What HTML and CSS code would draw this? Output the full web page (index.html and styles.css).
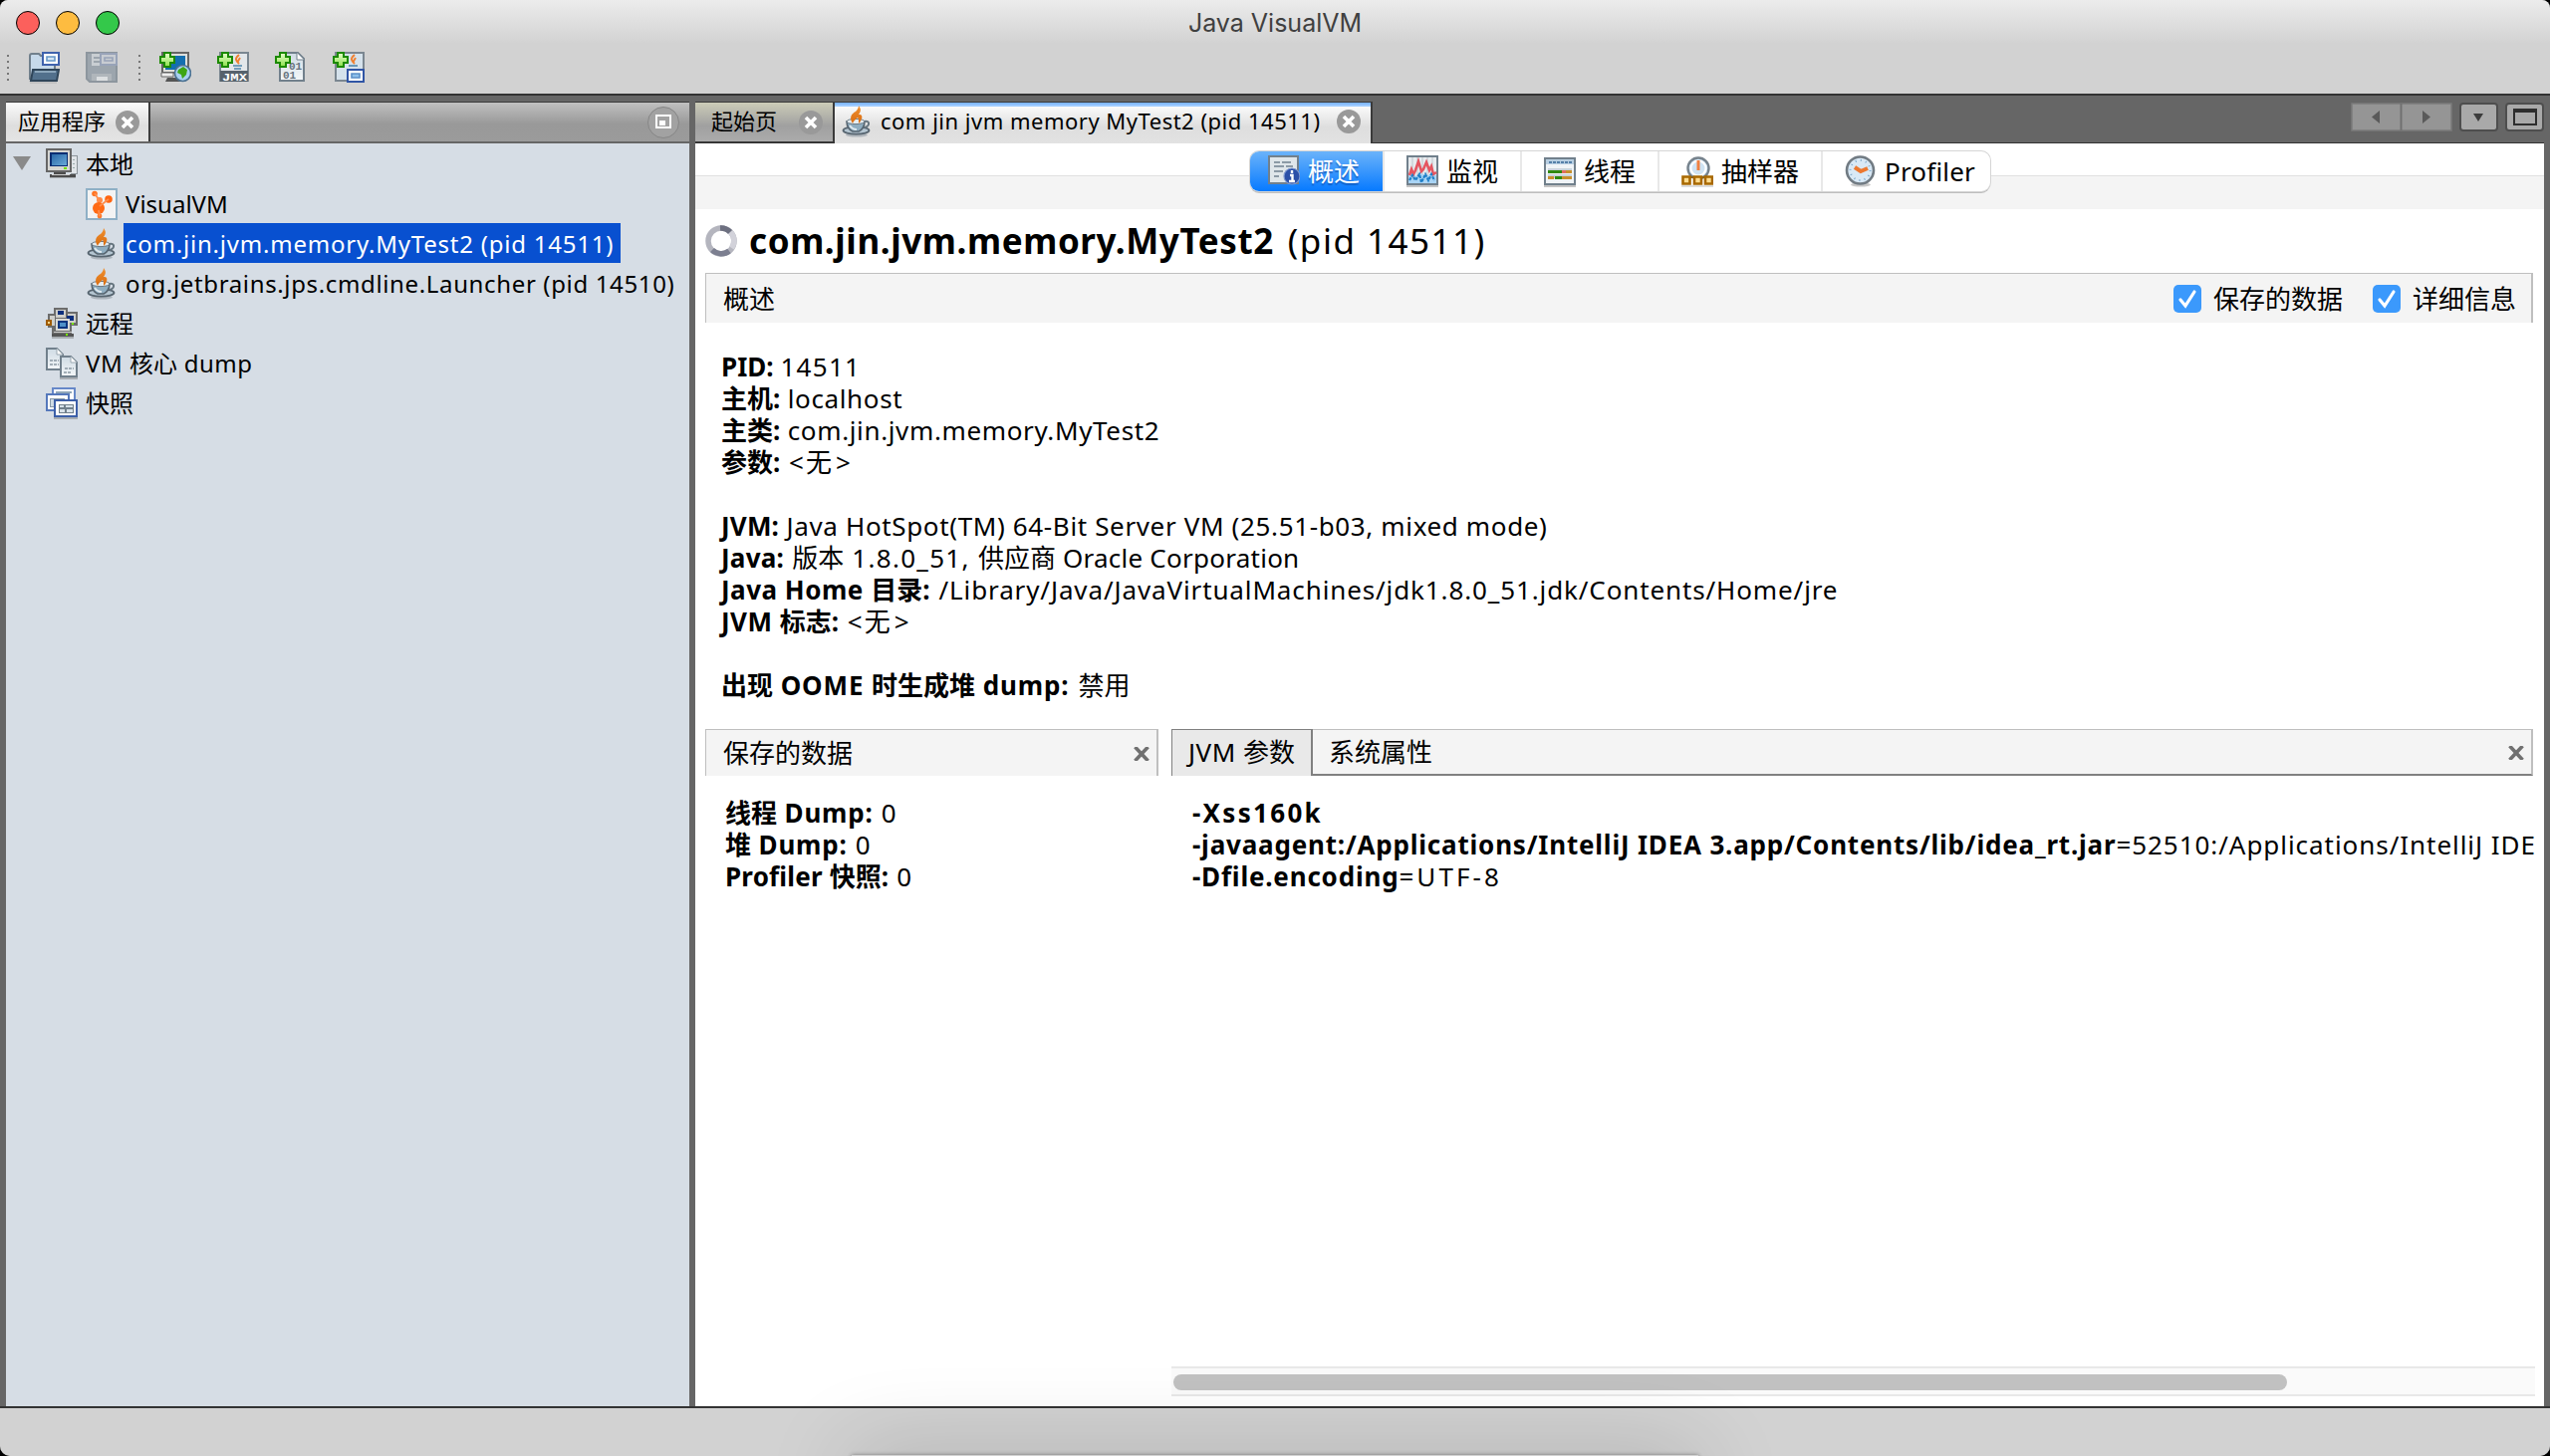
FILE: index.html
```
<!DOCTYPE html>
<html lang="zh-CN">
<head>
<meta charset="utf-8">
<title>Java VisualVM</title>
<link rel="stylesheet" href="styles.css">
</head>
<body>
<svg class="defs" width="0" height="0">
  <defs>
    <linearGradient id="gFlame" x1="0" y1="0" x2="0" y2="1"><stop offset="0" stop-color="#f09030"/><stop offset="1" stop-color="#d96c10"/></linearGradient>
    <linearGradient id="gScreen" x1="0" y1="0" x2="1" y2="1"><stop offset="0" stop-color="#2a68a8"/><stop offset="1" stop-color="#69a9d8"/></linearGradient>
    <linearGradient id="gPaper" x1="0" y1="0" x2="0" y2="1"><stop offset="0" stop-color="#cfdbe4"/><stop offset="1" stop-color="#f4f7f9"/></linearGradient>
    <linearGradient id="gPlus" x1="0" y1="0" x2="0" y2="1"><stop offset="0" stop-color="#e8ffd0"/><stop offset="1" stop-color="#8ce04a"/></linearGradient>
  </defs>
  <symbol id="plus" viewBox="0 0 16 16"><path d="M5 1h6v4h4v6h-4v4H5v-4H1V5h4z" fill="url(#gPlus)" stroke="#1c8a00" stroke-width="2"/></symbol>
  <symbol id="close" viewBox="0 0 24 24"><circle cx="12" cy="12" r="12" fill="#999"/><path d="M7 7l10 10M17 7L7 17" stroke="#fff" stroke-width="3.600"/></symbol>
  <symbol id="cross" viewBox="0 0 16 14"><path d="M1.500 0l13 14M14.500 0l-13 14" stroke="#707070" stroke-width="3.600"/></symbol>
  <symbol id="java" viewBox="0 0 32 32">
    <ellipse cx="16" cy="29.500" rx="11" ry="2" fill="#9aa3ab" opacity=".7"/>
    <ellipse cx="15.500" cy="25" rx="13" ry="3.600" fill="#b4c5d1" stroke="#56646f" stroke-width="1.800"/>
    <path d="M6 16h18c0 5-3 9-6 10h-6c-3-1-6-5-6-10z" fill="#8fadc0" stroke="#56646f" stroke-width="1.600"/>
    <path d="M24 16c5-1 6 4 0 6" fill="none" stroke="#66757f" stroke-width="2"/>
    <ellipse cx="15" cy="16" rx="9" ry="2.600" fill="#e5edf2" stroke="#6b7a85"/>
    <path d="M9 20c2 3 5 4 7 4" stroke="#dfe9ef" stroke-width="2" fill="none"/>
    <path d="M12 18c-4-6-1-10 3-12 2-2 3-4 3-6 3 4 2 6 0 9 5-1 4 5 0 9 0-3 0-5-1-6-2 2-4 3-5 6z" fill="url(#gFlame)"/>
  </symbol>
  <symbol id="local" viewBox="0 0 32 32" shape-rendering="crispEdges">
    <path d="M24 7h8v19h-8z" fill="#e0e4e8"/><path d="M25 7h6v18h-6" fill="none" stroke="#8c949a" stroke-width="1"/><path d="M27 11h2M27 15h2M27 19h2" stroke="#9aa"/>
    <path d="M0 0h26v24H0z" fill="#666"/><path d="M2 2h22v20H2z" fill="#d6d6d2"/>
    <path d="M4 4h18v14H4z" fill="#082d72"/><path d="M6 6h15v11H6z" fill="url(#gScreen)"/>
    <path d="M18 19h3v2h-3z" fill="#70e000"/><path d="M8 24h12v2H8zM4 26h26v3H4z" fill="#4c4c4c"/><path d="M6 26h18v1H6z" fill="#ccc"/><path d="M4 29h26v1H4z" fill="#a8adb2"/>
  </symbol>
  <symbol id="vvm" viewBox="0 0 32 32">
    <path d="M1 1h30v30H1z" fill="#f3f3f3" stroke="#8fb0c6" stroke-width="2"/>
    <circle cx="9" cy="5.500" r="2.800" fill="#ff7320"/><circle cx="14" cy="12" r="3" fill="#ff8a48"/><circle cx="23" cy="11" r="3.800" fill="#ff6510"/><circle cx="13" cy="20" r="6" fill="#ff6a14"/><circle cx="14" cy="28" r="2.400" fill="#ff7a2c"/><path d="M9 5l5 8M23 11l-9 7M13 22l1 6" stroke="#ff8d4c" stroke-width="1.800"/>
  </symbol>
  <symbol id="remote" viewBox="0 0 32 32" shape-rendering="crispEdges">
    <path d="M8 0h14v4h10v14h-6v12H6V20H2V6h6z" fill="#6c6c6c"/>
    <path d="M10 2h10v8H10zM22 6h8v9h-8zM4 8h5v10H4z" fill="#cfcfca"/>
    <path d="M12 3h6v4h-6zM21 8h7v5h-7z" fill="#0c2f7c"/>
    <path d="M10 11h14v12H10z" fill="#d9d9d5"/><path d="M12 13h10v8H12z" fill="#0b3580"/><path d="M14 15h6v4h-6z" fill="#4d90c9"/>
    <path d="M0 12h6v6H0z" fill="#a05c00"/><path d="M2 14h2v2H2z" fill="#ffd58a"/>
    <path d="M8 24h18v1H8z" fill="#ccc"/><path d="M6 26h22v3H6z" fill="#555"/><path d="M20 26h2v2h-2zM26 15h2v2h-2z" fill="#7e0"/><path d="M6 29h22v2H6z" fill="#a8adb2"/>
  </symbol>
  <symbol id="dump" viewBox="0 0 32 32">
    <path d="M1 1h10l6 6v15H1z" fill="url(#gPaper)" stroke="#71808c" stroke-width="2"/><path d="M11 1v6h6" fill="#fff" stroke="#9aa7b1"/><path d="M4 13h9M4 17h9" stroke="#8b98a2" stroke-width="1.600" stroke-dasharray="3 1"/>
    <path d="M15 9h10l6 6v14H15z" fill="url(#gPaper)" stroke="#71808c" stroke-width="2"/><path d="M25 9v6h6" fill="#fff" stroke="#9aa7b1"/><path d="M19 21h9M18 25h8" stroke="#8b98a2" stroke-width="1.600" stroke-dasharray="3 1"/>
    <path d="M14 31h18" stroke="#a8adb2" stroke-width="2"/>
  </symbol>
  <symbol id="snap" viewBox="0 0 32 32" shape-rendering="crispEdges">
    <path d="M7 1h22v16H7z" fill="#fff" stroke="#6688c8" stroke-width="2"/><path d="M10 5h16" stroke="#8fa6b8" stroke-width="2"/>
    <path d="M1 7h22v16H1z" fill="#fff" stroke="#5578bb" stroke-width="2"/><path d="M4 11h14v8H4z" fill="#cfdbe4" stroke="#8899a8"/>
    <path d="M9 13h22v16H9z" fill="#fff" stroke="#3c5fa8" stroke-width="2"/><path d="M13 17h14v8H13z" fill="#d8e2ea" stroke="#71808c"/><path d="M13 21h6v-4M20 25v-4h7" fill="none" stroke="#71808c" stroke-width="1.500"/>
    <path d="M8 31h24" stroke="#a8adb2" stroke-width="2"/>
  </symbol>
</svg>

<div class="window">
  <header class="chrome">
    <div class="titlebar">
      <div class="lights"><i class="red"></i><i class="amber"></i><i class="green"></i></div>
      <div class="caption">Java VisualVM</div>
    </div>
    <div class="toolbar">
      <i class="grip"></i>
      <svg class="tool" viewBox="0 0 32 32"><path d="M2 28V4q0-2 2-2h7l2 2h14v16" fill="#c6d9ea" stroke="#71808c" stroke-width="2"/><path d="M5 18h26l-2 11H3z" fill="#52708c" stroke="#2f4559" stroke-width="2"/><path d="M7 20h21" stroke="#8ba5ba" stroke-width="2"/><path d="M15 1h16v12H15z" fill="#fff" stroke="#3f62ad" stroke-width="2"/><path d="M19 5h8v4h-8z" fill="#d4e6f5" stroke="#6697c8" stroke-width="1.600"/><path d="M2 31h27" stroke="#b0b0b0"/></svg>
      <svg class="tool" viewBox="0 0 32 32"><path d="M1 1h30v29H4l-3-3z" fill="#9ca5ad" stroke="#8d969e" stroke-width="2"/><path d="M6 2h20v12H6z" fill="#c9ced2"/><path d="M8 6h6M8 10h6" stroke="#9ca5ad" stroke-width="2"/><path d="M15 2h16v11H15z" fill="#c8ccd2" stroke="#98a3b8" stroke-width="2"/><path d="M19 6h8v3h-8z" fill="none" stroke="#98a3b8" stroke-width="1.600"/><path d="M6 22h20v7H6z" fill="#b0b6bb"/><path d="M11 25h11v4H11z" fill="#dcdfe1"/></svg>
      <i class="grip grip-2"></i>
      <svg class="tool" viewBox="0 0 32 32"><path d="M3 1h26v20H3z" fill="#dedfdc" stroke="#666" stroke-width="2"/><path d="M6 4h20v14H6z" fill="#136fb0"/><path d="M8 26h14v4H6z" fill="#555"/><path d="M2 21h12v4H2z" fill="#eee" stroke="#666"/><circle cx="23.500" cy="21.500" r="8" fill="#a9d0f0" stroke="#4b7192" stroke-width="1.600"/><path d="M19 18l5-3 4 3-1 5-4 4-1-4-4-2z" fill="#3da514"/><use href="#plus" width="16" height="16"/></svg>
      <svg class="tool" viewBox="0 0 32 32"><path d="M3 1h28v28H3z" fill="#e3e7ea" stroke="#7b8791" stroke-width="2"/><path d="M22 3c-5 4-3 6 0 9M23 6l-3 5" stroke="#f08030" stroke-width="2" fill="none"/><path d="M16 14h9M17 17h7" stroke="#4d86ad" stroke-width="1.600"/><path d="M3 19h28v11H3z" fill="#56626c"/><text x="17.500" y="29" class="mini" fill="#fff" text-anchor="middle" textLength="25" lengthAdjust="spacingAndGlyphs">JMX</text><use href="#plus" width="16" height="16"/></svg>
      <svg class="tool" viewBox="0 0 32 32"><path d="M5 1h18l6 6v22H5z" fill="url(#gPaper)" stroke="#71808c" stroke-width="2"/><path d="M22 1v7h7" fill="#fff" stroke="#71808c"/><text x="14" y="18" class="mini" fill="#67747f">01</text><text x="8" y="27" class="mini" fill="#67747f">01</text><use href="#plus" width="16" height="16"/></svg>
      <svg class="tool" viewBox="0 0 32 32"><path d="M3 1h28v28H3z" fill="#d5e2ec" stroke="#7b8791" stroke-width="2"/><path d="M22 3c-5 4-3 6 0 9M23 6l-3 5" stroke="#f08030" stroke-width="2" fill="none"/><path d="M16 14h9" stroke="#4d86ad" stroke-width="1.600"/><path d="M15 18h16v12H15z" fill="#fff" stroke="#3055a5" stroke-width="2"/><path d="M19 22h8v4h-8z" fill="#8fc0ea" stroke="#5b8fc8" stroke-width="1.600"/><use href="#plus" width="16" height="16"/></svg>
    </div>
  </header>

  <main class="desk">
    <aside class="side">
      <div class="side-head">
        <div class="side-tab"><span>应用程序</span><svg class="x24"><use href="#close"/></svg></div>
        <svg class="min" viewBox="0 0 32 32"><circle cx="16" cy="16" r="15.500" fill="#a2a2a2" stroke="#868686"/><path d="M9 9h14v12H9z" fill="none" stroke="#fff" stroke-width="2"/><path d="M12 14h6v5h-6z" fill="#fff"/></svg>
      </div>
      <ul class="tree">
        <li class="node"><i class="arrow"></i><svg class="ic"><use href="#local"/></svg><span class="lbl">本地</span></li>
        <li class="node child"><svg class="ic"><use href="#vvm"/></svg><span class="lbl l0">VisualVM</span></li>
        <li class="node child"><svg class="ic"><use href="#java"/></svg><span class="lbl sel l7">com.jin.jvm.memory.MyTest2 (pid 14511)</span></li>
        <li class="node child"><svg class="ic"><use href="#java"/></svg><span class="lbl l6">org.jetbrains.jps.cmdline.Launcher (pid 14510)</span></li>
        <li class="node"><svg class="ic"><use href="#remote"/></svg><span class="lbl">远程</span></li>
        <li class="node"><svg class="ic"><use href="#dump"/></svg><span class="lbl"><span class="l5">VM </span>核心<span class="l5"> dump</span></span></li>
        <li class="node"><svg class="ic"><use href="#snap"/></svg><span class="lbl">快照</span></li>
      </ul>
    </aside>

    <section class="work">
      <div class="tabs">
        <div class="tab idle"><span>起始页</span><svg class="x24"><use href="#close"/></svg></div>
        <div class="tab active"><svg class="tab-ic"><use href="#java"/></svg><span class="l5">com jin jvm memory MyTest2 (pid 14511)</span><svg class="x24"><use href="#close"/></svg></div>
        <div class="winbtns">
          <svg class="pair" viewBox="0 0 102 29"><path d="M1 1h100v27H1z" fill="#959595" stroke="#7b7b7b" stroke-width="1.500"/><path d="M50.500 1v27" stroke="#707070" stroke-width="2"/><path d="M29 8v13l-8-6.500zM72 8v13l8-6.500z" fill="#5a5a5a"/></svg>
          <svg class="one" viewBox="0 0 39 29"><rect x="1" y="1" width="37" height="27" rx="3" fill="#a9a9a9" stroke="#4e4e4e" stroke-width="2"/><path d="M14 11h10l-5 8z" fill="#3c3c3c"/></svg>
          <svg class="one" viewBox="0 0 39 29"><rect x="1" y="1" width="37" height="27" rx="3" fill="#a9a9a9" stroke="#4e4e4e" stroke-width="2"/><path d="M9 7h22v15H9z" fill="none" stroke="#2e2e2e" stroke-width="2"/><path d="M8 6h24v4H8z" fill="#2e2e2e"/></svg>
        </div>
      </div>

      <div class="page">
        <div class="switch">
          <div class="segs">
            <div class="seg on"><svg class="ic" viewBox="0 0 32 32"><path d="M1 1h29v27H1z" fill="#dfe6ea" stroke="#71808c" stroke-width="2"/><path d="M6 7h6M14 7h9M6 11h10M18 11h7M6 16h9M6 21h5" stroke="#8b9aa6" stroke-width="2"/><circle cx="24" cy="21" r="8" fill="#2b50a8" stroke="#7f99d0" stroke-width="1.200"/><path d="M24 15v3M22 20h2.500v6M21 26h6" stroke="#fff" stroke-width="2.400" fill="none"/></svg><span>概述</span></div>
            <div class="seg s2"><svg class="ic" viewBox="0 0 32 32"><path d="M1 1h30v28H1z" fill="#e8ecef" stroke="#71808c" stroke-width="2"/><path d="M6 2v18M11 2v18M16 2v18M21 2v18M26 2v18" stroke="#bdc6cd"/><path d="M2 20l4-2 4 3 5-3 5 3 5-3 5 2v8H2z" fill="#a9d4f5"/><path d="M3 20l2-6 2 5 2-4 3-9 3 10 2-2 3-7 3 8 2-4 2 8 3-2" fill="none" stroke="#e55560" stroke-width="2.600"/><path d="M3 25l3-5 3 5 4-6 2 8 4-8 3 6 3-6 3 6" fill="none" stroke="#1e7fc8" stroke-width="2.200" stroke-dasharray="3 1"/><path d="M0 31h32" stroke="#c4c4c4" stroke-width="2"/></svg><span>监视</span></div>
            <div class="seg s3"><svg class="ic" viewBox="0 0 32 32" shape-rendering="crispEdges"><path d="M1 3h30v26H1z" fill="#f0f4f7" stroke="#71808c" stroke-width="2"/><path d="M2 4h28v5H2z" fill="#b8cfe2"/><path d="M5 7h23" stroke="#5580a8" stroke-width="2" stroke-dasharray="3 1"/><path d="M4 15h24M4 21h24" stroke="#c9d3da" stroke-width="4"/><path d="M4 16h14" stroke="#308a10" stroke-width="3"/><path d="M18 16h4" stroke="#e07060" stroke-width="3"/><path d="M22 16h6M4 22h6M18 22h10" stroke="#c8902c" stroke-width="3"/><path d="M11 22h7" stroke="#308a10" stroke-width="3"/><path d="M0 31h32" stroke="#c4c4c4" stroke-width="2"/></svg><span>线程</span></div>
            <div class="seg s4"><svg class="ic" viewBox="0 0 32 32"><circle cx="17" cy="13" r="10.500" fill="#cfe3f3" stroke="#76828c" stroke-width="2.400"/><circle cx="17" cy="13" r="7.500" fill="none" stroke="#fff" stroke-width="2"/><path d="M17 5v10" stroke="#f08040" stroke-width="3"/><path d="M4 22h26" stroke="#8b6520" stroke-width="2"/><path d="M1.500 21.500h7v7h-7zM13 21.500h7v7h-7zM24 21.500h7v7h-7z" fill="#ffdc90" stroke="#a86800" stroke-width="2.600"/><path d="M0 31h32" stroke="#d0d0d0" stroke-width="1.500"/></svg><span>抽样器</span></div>
            <div class="seg s5"><svg class="ic" viewBox="0 0 32 32"><ellipse cx="16" cy="29.500" rx="10" ry="2" fill="#c8c8c8"/><circle cx="15.500" cy="15" r="13.500" fill="#d9e9f6" stroke="#717b83" stroke-width="2.600"/><circle cx="15.500" cy="15" r="10" fill="none" stroke="#7aa6c8" stroke-width="2" stroke-dasharray="1 4.236"/><path d="M10 12l6 4 7-3" fill="none" stroke="#ec7830" stroke-width="4"/></svg><span class="l2">Profiler</span></div>
          </div>
        </div>

        <h1 class="heading"><svg class="spin" viewBox="0 0 32 32"><circle cx="16" cy="16" r="13" fill="none" stroke="#b4b5be" stroke-width="5.500"/><path d="M15 3a13 13 0 0 1 10 4" fill="none" stroke="#6d7080" stroke-width="5.500"/><path d="M25.500 7a13 13 0 0 1 1 16" fill="none" stroke="#d2d2da" stroke-width="5.500"/><path d="M24 26a13 13 0 0 1-17-1" fill="none" stroke="#7c7f90" stroke-width="5.500"/></svg><b>com.jin.jvm.memory.MyTest2</b><span class="pid">(pid 14511)</span></h1>

        <div class="bar top">
          <span class="grow">概述</span>
          <label class="chk"><svg viewBox="0 0 28 28"><rect width="28" height="28" rx="5" fill="#3b99fc"/><path d="M7 15l5 6L21 7" fill="none" stroke="#fff" stroke-width="3.200" stroke-linecap="round"/></svg><span>保存的数据</span></label>
          <label class="chk"><svg viewBox="0 0 28 28"><rect width="28" height="28" rx="5" fill="#3b99fc"/><path d="M7 15l5 6L21 7" fill="none" stroke="#fff" stroke-width="3.200" stroke-linecap="round"/></svg><span>详细信息</span></label>
        </div>

        <div class="info">
          <p><b class="l0">PID:</b><span class="l0"> </span><span class="d1">14511</span></p>
          <p><b>主机:</b><span class="l6"> localhost</span></p>
          <p><b>主类:</b><span class="l6"> com.jin.jvm.memory.MyTest2</span></p>
          <p><b>参数:</b><span class="a"> &lt;</span>无<span class="g">&gt;</span></p>
          <p>&nbsp;</p>
          <p><b class="l2">JVM:</b><span class="l6"> Java HotSpot(TM) 64-Bit Server VM (25.51-b03, mixed mode)</span></p>
          <p><b class="l3">Java:</b><span class="d1"> </span>版本<span class="d1"> 1.8.0_51, </span>供应商<span class="l3"> Oracle Corporation</span></p>
          <p><b><span class="l5">Java Home </span>目录:</b><span class="w2"> </span><span class="l9">/Library/Java/JavaVirtualMachines/jdk1.8.0_51.jdk/Contents/Home/jre</span></p>
          <p><b><span class="l5">JVM </span>标志:</b><span class="a"> &lt;</span>无<span class="g">&gt;</span></p>
          <p>&nbsp;</p>
          <p><b>出现<span class="l9"> OOME </span>时生成堆<span class="l9"> dump:</span></b><span class="w2"> </span>禁用</p>
        </div>

        <div class="panes">
          <div class="pane left">
            <div class="bar"><span class="grow">保存的数据</span><svg class="x16"><use href="#cross"/></svg></div>
            <div class="rows">
              <p><b>线程<span class="l8"> Dump:</span></b><span class="d1"> 0</span></p>
              <p><b>堆<span class="l8"> Dump:</span></b><span class="d1"> 0</span></p>
              <p><b><span class="l2">Profiler </span>快照:</b><span class="d1"> 0</span></p>
            </div>
          </div>
          <div class="pane right">
            <div class="bar2">
              <div class="on2"><span class="l5">JVM </span>参数</div>
              <div class="rest"><span class="grow">系统属性</span><svg class="x16"><use href="#cross"/></svg></div>
            </div>
            <div class="rows args">
              <p><b class="w2">-Xss160k</b></p>
              <p><b class="l8">-javaagent:/Applications/IntelliJ IDEA 3.app/Contents/lib/idea_rt.jar</b><span class="w1">=52510:/Applications/IntelliJ IDE</span></p>
              <p><b class="l8">-Dfile.encoding</b><span class="w3">=UTF-8</span></p>
            </div>
            <div class="scroll"><i></i></div>
          </div>
        </div>
      </div>
    </section>
  </main>
  <footer class="status"></footer>
  <div class="glow"></div>
</div>
</body>
</html>
```
FILE: styles.css
```
* { box-sizing: border-box; }
html, body { margin: 0; background: #000; }
body { font: 26px "Noto Sans", "Noto Sans CJK SC", sans-serif; color: #000; }
svg { display: block; flex: none; }
.defs { position: absolute; }
p { margin: 0; white-space: pre; }
i { display: block; flex: none; }

/* letter spacing steps */
.l0 { letter-spacing: 0; }
.l2 { letter-spacing: .2px; }
.l3 { letter-spacing: .25px; }
.l5 { letter-spacing: .5px; }
.l6 { letter-spacing: .64px; }
.l7 { letter-spacing: .78px; }
.l8 { letter-spacing: .8px; }
.l9 { letter-spacing: .88px; }
.d1 { letter-spacing: 1.3px; }
.w1 { letter-spacing: .95px; }
.w2 { letter-spacing: 2.3px; }
.w3 { letter-spacing: 3.1px; }
.a { letter-spacing: 2px; }
.g { margin-left: 4px; }

.window { position: relative; width: 2560px; height: 1462px; display: flex; flex-direction: column; overflow: hidden; border-radius: 8px 8px 10px 10px; background: #666; }

/* window chrome */
.chrome { height: 96px; border-bottom: 2px solid #333; background: linear-gradient(#ececec, #d2d2d2 44px); }
.titlebar { height: 44px; display: grid; grid-template-columns: 240px 1fr 240px; align-items: center; }
.lights { display: flex; gap: 16px; padding-left: 16px; }
.lights i { width: 24px; height: 24px; border-radius: 50%; border: 1px solid; }
.red { background: #fc605c; border-color: #e0443e; }
.amber { background: #fdbc40; border-color: #dea035; }
.green { background: #34c84a; border-color: #27aa35; }
.caption { text-align: center; font: 25px/44px Inter, sans-serif; color: #404040; padding-top: 1px; }
.toolbar { display: flex; align-items: center; height: 48px; padding-left: 7px; gap: 26px; }
.tool { width: 32px; height: 32px; }
.mini { font: bold 11px "Liberation Mono", monospace; }
.grip { width: 2px; height: 26px; margin-right: -7px; background: repeating-linear-gradient(#777 0 2px, transparent 2px 6px); }
.grip-2 { margin: 0 -7px 0 -5px; }

.desk { flex: 1; display: flex; gap: 6px; padding: 6px 6px 0; min-height: 0; border-bottom: 2px solid #333; }
.status { height: 48px; background: #d2d2d2; flex: none; }

/* left panel */
.side { width: 686px; display: flex; flex-direction: column; }
.side-head { height: 42px; display: flex; justify-content: space-between; align-items: center; border-top: 1px solid #3a3a3a; border-bottom: 2px solid #666; background: linear-gradient(#c0c0c0, #999 55%, #9b9b9b); padding-right: 10px; }
.side-tab { height: 39px; width: 145px; display: flex; align-items: center; gap: 10px; padding-left: 12px; font-size: 22px; line-height: 36px; background: linear-gradient(#fafafa, #dedede 60%, #e4e4e4); border-right: 2px solid #3c3c3c; }
.side-tab span { padding-bottom: 3px; }
.x24 { width: 24px; height: 24px; }
.min { width: 32px; height: 32px; }
.tree { flex: 1; margin: 0; padding: 0; list-style: none; background: #d6dde5; font-size: 24px; line-height: 38px; }
.node { position: relative; height: 40px; display: flex; align-items: center; padding: 2px 0 0 40px; }
.child { padding-left: 80px; }
.ic { width: 32px; height: 32px; }
.lbl { align-self: flex-end; height: 40px; margin-left: 6px; padding: 2px 7px 0 2px; white-space: pre; }
.sel { background: #0850d0; color: #fff; }
.arrow { position: absolute; left: 7px; top: 13px; border: 9px solid transparent; border-top: 14px solid #8a8a8a; border-bottom: 0; }

/* right panel */
.work { flex: 1; min-width: 0; display: flex; flex-direction: column; }
.tabs { height: 42px; display: flex; flex: none; border-bottom: 1px solid #333; }
.tab { display: flex; align-items: center; font-size: 22px; line-height: 34px; white-space: pre; border-top: 1px solid #3a3a3a; border-right: 2px solid #3a3a3a; }
.tab span { padding-bottom: 5px; }
.idle { width: 140px; padding: 0 10px 0 16px; justify-content: space-between; background: linear-gradient(#ccccb8, #a0a0a0 60%, #ababab); border-bottom: 1px solid #3a3a3a; }
.idle span { padding-bottom: 3px; }
.active { width: 540px; padding-left: 6px; margin-bottom: -1px; background: linear-gradient(#82b9fb 0 2px, #9fcbff 2px 4px, #fafafa 4px, #dedede 60%, #e2e2e2); }
.tab-ic { width: 32px; height: 32px; margin: 0 8px 4px 0; }
.active .x24 { margin: 0 10px 3px auto; }
.winbtns { display: flex; margin: 1px 0 0 auto; gap: 7px; }
.pair { width: 102px; height: 29px; }
.one { width: 39px; height: 29px; }

.page { flex: 1; min-height: 0; background: #fff; display: flex; flex-direction: column; }
.switch { height: 66px; flex: none; display: flex; padding: 8px 0 0 557px; background: linear-gradient(#fff 32px, #e0e0e0 32px 33px, #f4f4f4 33px); }
.segs { display: flex; width: 743px; height: 40px; border-radius: 9px; background: #fff; box-shadow: 0 0 0 1px #d5d5d5, 0 2px 0 #bdbdbd; }
.seg { display: flex; align-items: center; gap: 8px; line-height: 38px; padding-left: 22px; border-left: 2px solid #e8e8e8; }
.s2, .s3 { width: 138px; }
.s4 { width: 164px; }
.s5 { flex: 1; gap: 8px; }
.on { width: 133px; padding-left: 18px; border: 0; border-radius: 9px 0 0 9px; color: #fff; background: linear-gradient(#6bb3fa, #067aff); text-shadow: 0 2px 1px rgba(0,40,120,.4); }

.heading { display: flex; align-items: center; flex: none; height: 64px; margin: 0; padding-left: 10px; font-size: 35px; line-height: 64px; font-weight: 400; }
.spin { width: 32px; height: 32px; margin-right: 12px; }
.heading b { letter-spacing: .6px; }
.pid { margin-left: 14px; letter-spacing: 1.500px; }

.bar { display: flex; align-items: center; height: 47px; padding: 0 7px 0 17px; border: solid #bfbfbf; border-width: 1px 2px 0 1px; background: #f4f4f4; }
.bar span, .rest span { padding-bottom: 2px; }
.top { height: 50px; flex: none; margin: 0 11px 0 10px; padding-right: 15px; }
.grow { flex: 1; }
.chk { display: flex; align-items: center; gap: 12px; margin-left: 30px; }
.chk svg { width: 28px; height: 28px; }
.x16 { width: 16px; height: 14px; margin-top: 2px; }

.info { flex: none; height: 408px; padding: 28px 0 0 26px; line-height: 32px; }
.panes { flex: 1; min-height: 0; display: flex; gap: 13px; padding: 0 9px 10px 10px; }
.left { width: 455px; }
.right { width: 1369px; display: flex; flex-direction: column; }
.rows { padding: 21px 0 0 20px; line-height: 32px; }
.args { flex: 1; padding-left: 21px; }
.bar2 { display: flex; height: 47px; margin-right: 2px; flex: none; }
.on2 { width: 142px; padding-left: 16px; line-height: 45px; white-space: pre; background: #e9e9e9; border: solid #808080; border-width: 1px 2px 0 1px; }
.rest { flex: 1; display: flex; align-items: center; padding: 0 7px 0 16px; background: #f4f4f4; border: solid #bfbfbf; border-width: 1px 2px 2px 0; border-bottom-color: #808080; }
.scroll { height: 30px; padding: 6px 0 0 2px; background: #fafafa; border: solid #e8e8e8; border-width: 2px 0; }
.scroll i { width: 1118px; height: 16px; border-radius: 8px; background: #c1c1c1; }

/* soft shadow rising from below the window */
.glow { position: absolute; left: 855px; top: 1461px; width: 850px; height: 60px; box-shadow: 0 0 4px rgba(0,0,0,.4), 0 0 90px rgba(0,0,0,.18); }
```
